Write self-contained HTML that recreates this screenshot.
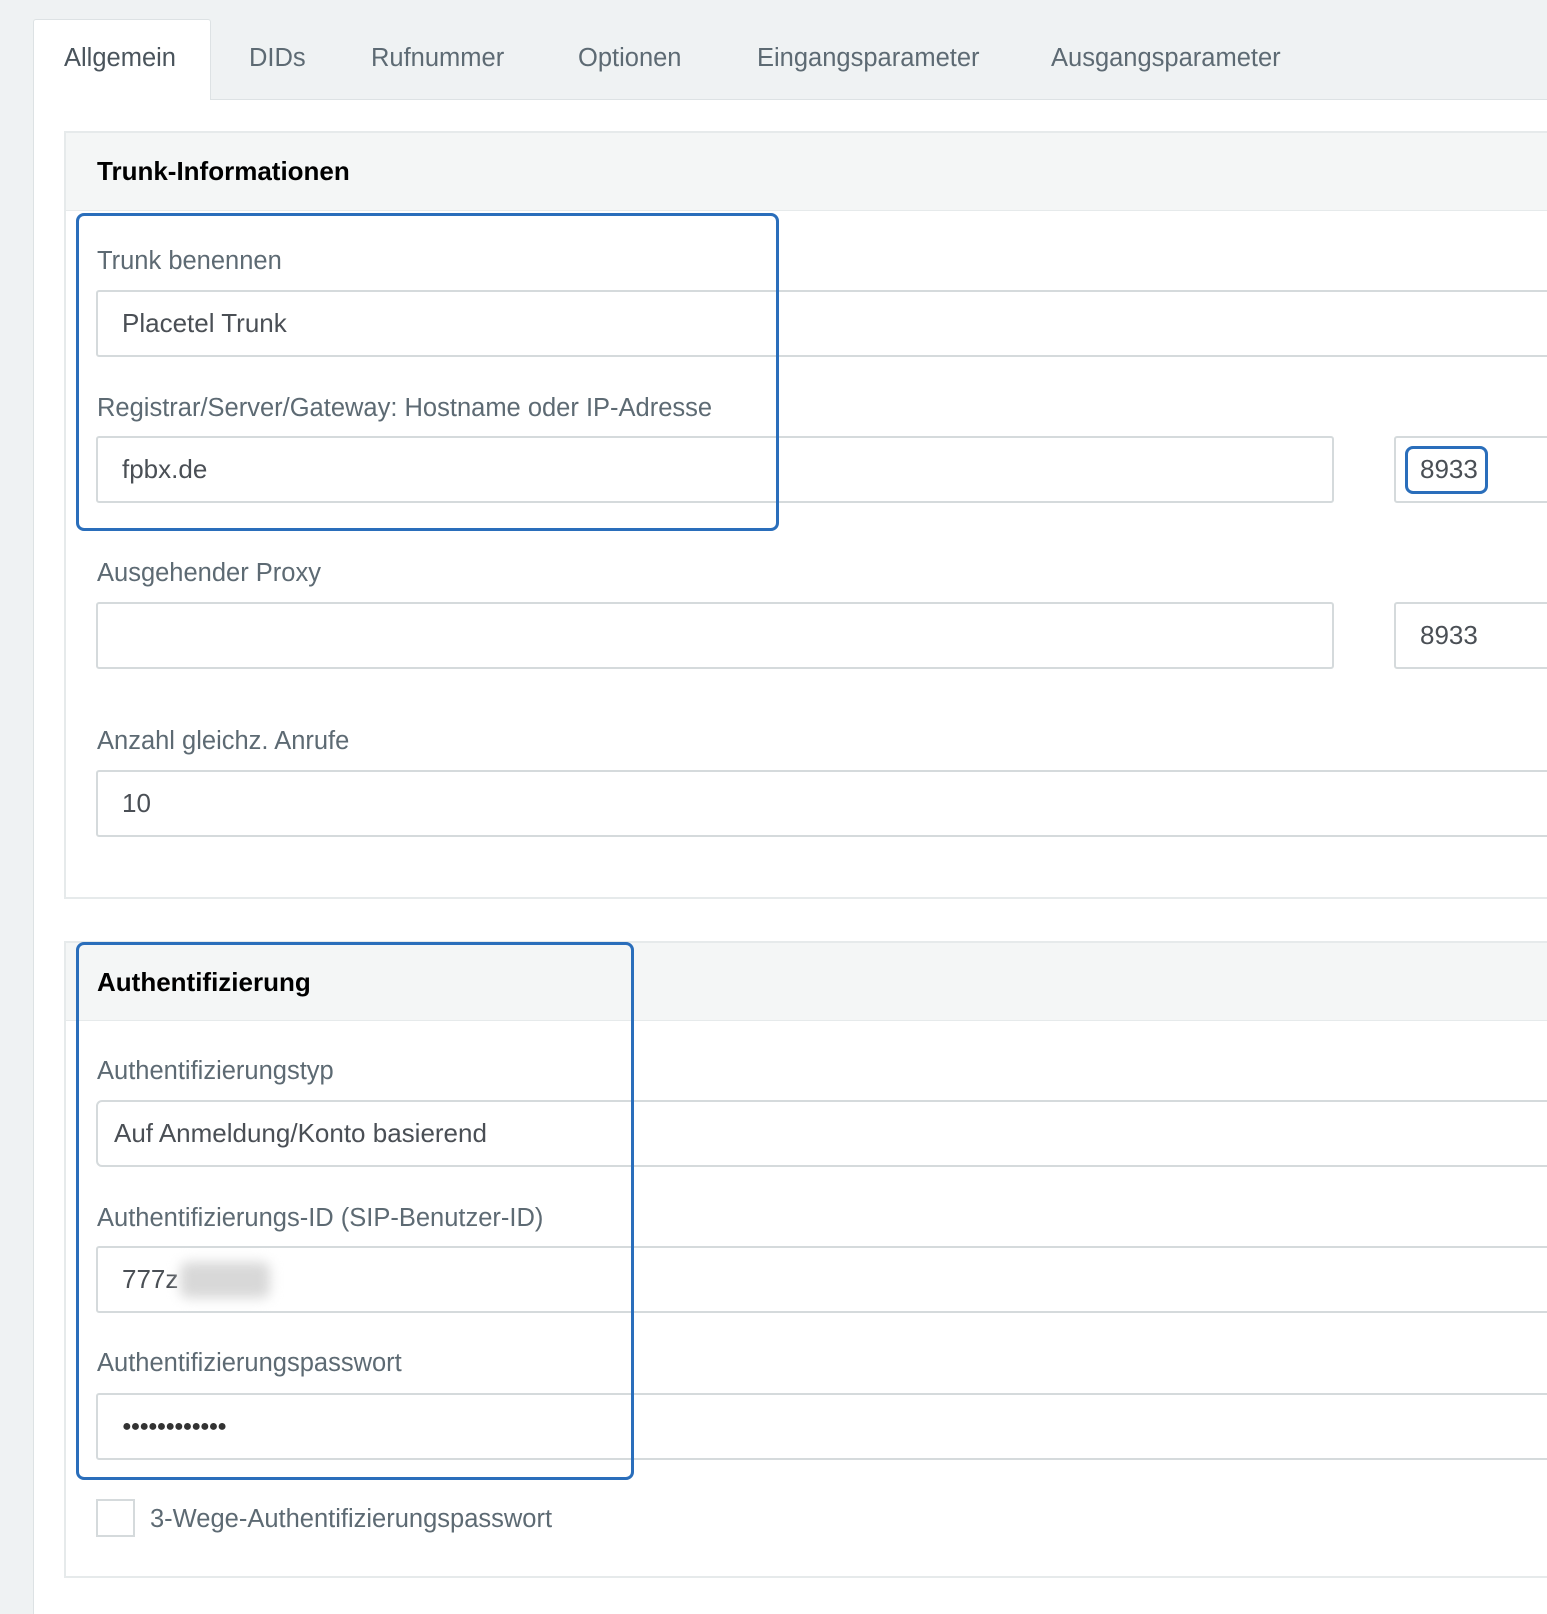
<!DOCTYPE html>
<html><head><meta charset="utf-8"><style>
*{box-sizing:border-box;margin:0;padding:0}
body{width:1547px;height:1614px;background:#eff2f3;font-family:"Liberation Sans",sans-serif;position:relative;overflow:hidden;color:#5d6a73}
.abs{position:absolute}
.panel{left:33px;top:99px;width:1514px;height:1515px;background:#fff;border-left:1px solid #dde2e4;border-top:1px solid #dde2e4}
.tab{top:19px;left:33px;width:178px;height:81px;background:#fff;border:1px solid #dde2e4;border-bottom:none;border-radius:3px 3px 0 0}
.tt{font-size:25.5px;color:#5d6a73;top:44px}
.card{left:64px;width:1483px;background:#fff;border:2px solid #e6eaeb;border-right:none}
.title{font-weight:bold;font-size:26px;color:#000;left:97px}
.lbl{font-size:25.5px;left:97px;color:#5d6a73}
.inp{border:2px solid #d5dadc;border-radius:3px;background:#fff;height:67px;font-size:26px;color:#4a4f55;padding-left:24px;line-height:63px}
.blue{border:3px solid #2a6ebb;border-radius:8px}
</style></head><body>
<div class="abs panel"></div>
<div class="abs tab"></div>
<div class="abs tt" style="left:64px;color:#4a545c">Allgemein</div>
<div class="abs tt" style="left:249px">DIDs</div>
<div class="abs tt" style="left:371px">Rufnummer</div>
<div class="abs tt" style="left:578px">Optionen</div>
<div class="abs tt" style="left:757px">Eingangsparameter</div>
<div class="abs tt" style="left:1051px">Ausgangsparameter</div>

<div class="abs card" style="top:131px;height:768px"></div>
<div class="abs" style="left:66px;top:133px;width:1481px;height:78px;background:#f4f6f6;border-bottom:1px solid #e6eaeb"></div>
<div class="abs title" style="top:156px">Trunk-Informationen</div>

<div class="abs lbl" style="top:247px">Trunk benennen</div>
<div class="abs inp" style="left:96px;top:290px;width:1460px">Placetel Trunk</div>
<div class="abs lbl" style="top:394px">Registrar/Server/Gateway: Hostname oder IP-Adresse</div>
<div class="abs inp" style="left:96px;top:436px;width:1238px">fpbx.de</div>
<div class="abs inp" style="left:1394px;top:436px;width:200px">8933</div>
<div class="abs blue" style="left:1405px;top:446px;width:83px;height:48px"></div>
<div class="abs blue" style="left:76px;top:213px;width:703px;height:318px"></div>

<div class="abs lbl" style="top:559px">Ausgehender Proxy</div>
<div class="abs inp" style="left:96px;top:602px;width:1238px"></div>
<div class="abs inp" style="left:1394px;top:602px;width:200px">8933</div>
<div class="abs lbl" style="top:727px">Anzahl gleichz. Anrufe</div>
<div class="abs inp" style="left:96px;top:770px;width:1460px">10</div>

<div class="abs card" style="top:941px;height:637px"></div>
<div class="abs" style="left:66px;top:943px;width:1481px;height:78px;background:#f4f6f6;border-bottom:1px solid #e6eaeb"></div>
<div class="abs title" style="top:967px">Authentifizierung</div>

<div class="abs lbl" style="top:1057px">Authentifizierungstyp</div>
<div class="abs inp" style="left:96px;top:1100px;width:1460px;padding-left:16px;border-radius:6px">Auf Anmeldung/Konto basierend</div>
<div class="abs lbl" style="top:1204px">Authentifizierungs-ID (SIP-Benutzer-ID)</div>
<div class="abs inp" style="left:96px;top:1246px;width:1460px">777z</div>
<div class="abs" style="left:180px;top:1262px;width:90px;height:36px;background:#d8d8d8;filter:blur(6px);border-radius:8px"></div>
<div class="abs lbl" style="top:1349px">Authentifizierungspasswort</div>
<div class="abs inp" style="left:96px;top:1393px;width:1460px;font-size:16px;letter-spacing:-1px;color:#333">●●●●●●●●●●●●</div>
<div class="abs blue" style="left:76px;top:942px;width:558px;height:538px"></div>

<div class="abs" style="left:96px;top:1499px;width:39px;height:38px;border:2px solid #d5dadc;background:#fff"></div>
<div class="abs lbl" style="left:150px;top:1505px">3-Wege-Authentifizierungspasswort</div>
</body></html>
